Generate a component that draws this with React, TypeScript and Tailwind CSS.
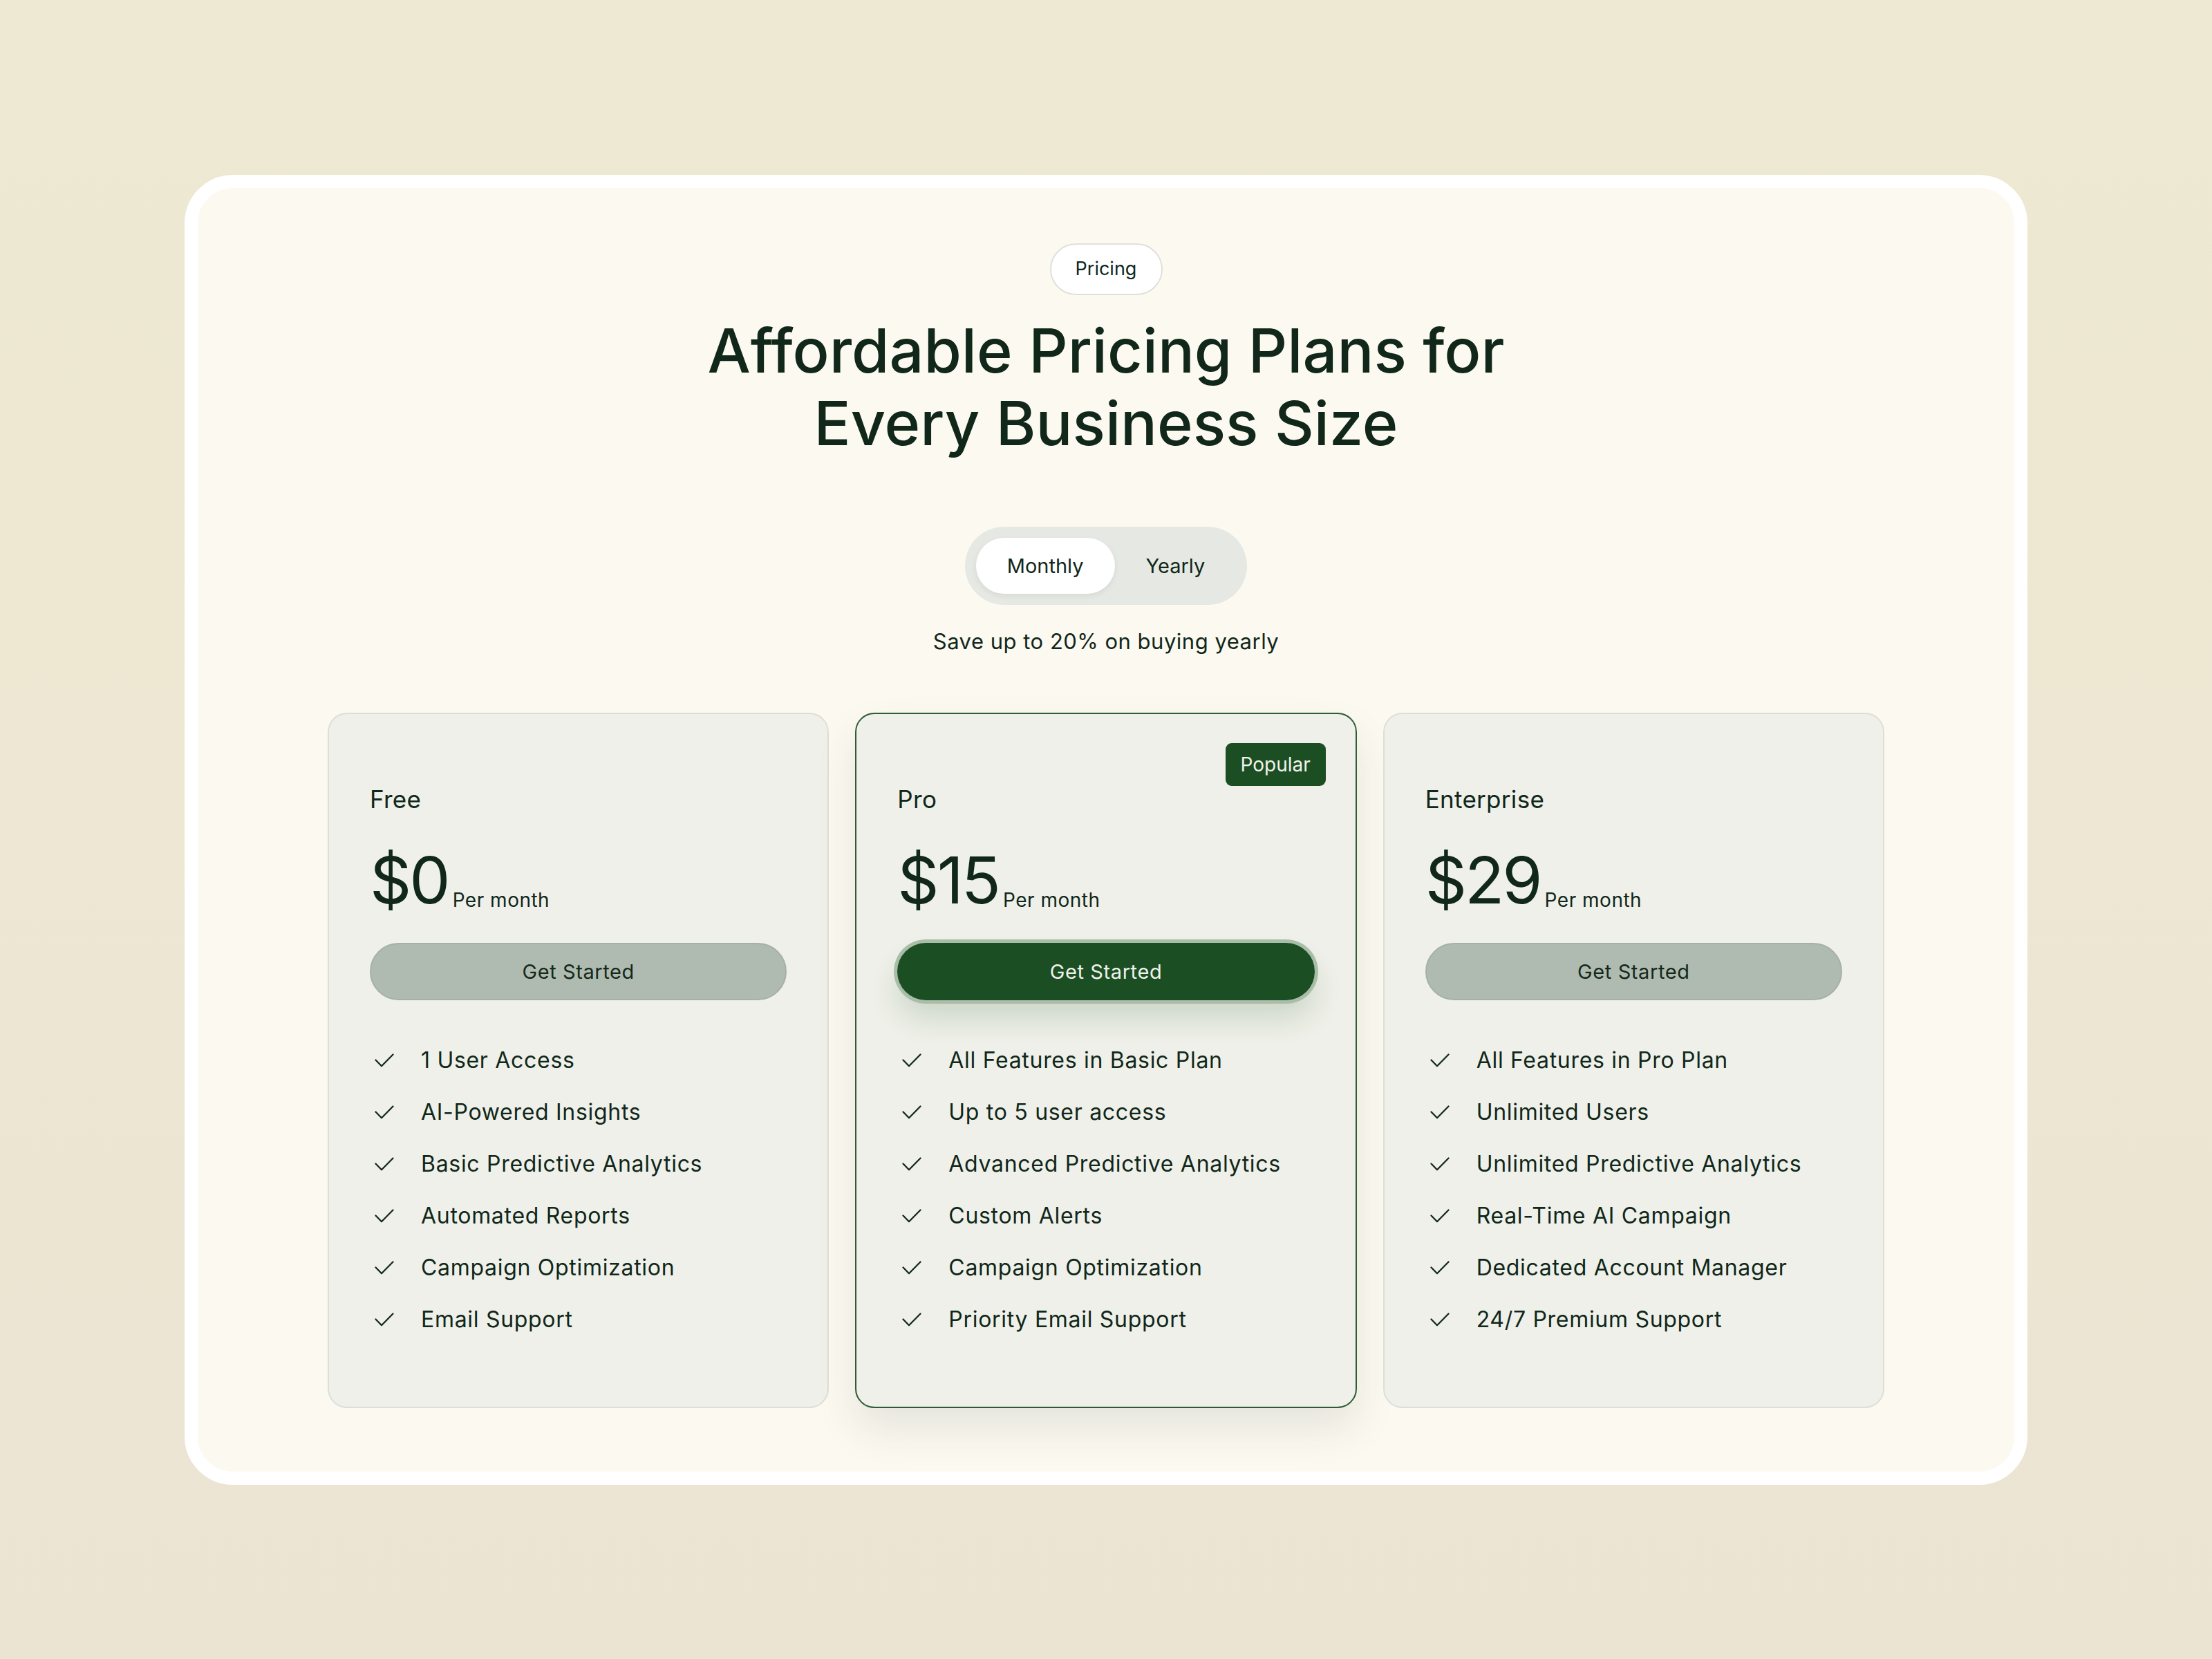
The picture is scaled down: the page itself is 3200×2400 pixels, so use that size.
import React from "react";

const CheckIcon = () => (
  <svg width="28" height="20" viewBox="0 0 28 20" fill="none" className="shrink-0">
    <path d="M1.5 9.5 L10 18.2 L26.5 1.5" stroke="#15291a" strokeWidth="2.3" strokeLinecap="round" strokeLinejoin="round" />
  </svg>
);

type Plan = {
  name: string;
  price: string;
  features: string[];
  featured?: boolean;
};

const plans: Plan[] = [
  {
    name: "Free",
    price: "$0",
    features: [
      "1 User Access",
      "AI-Powered Insights",
      "Basic Predictive Analytics",
      "Automated Reports",
      "Campaign Optimization",
      "Email Support",
    ],
  },
  {
    name: "Pro",
    price: "$15",
    featured: true,
    features: [
      "All Features in Basic Plan",
      "Up to 5 user access",
      "Advanced Predictive Analytics",
      "Custom Alerts",
      "Campaign Optimization",
      "Priority Email Support",
    ],
  },
  {
    name: "Enterprise",
    price: "$29",
    features: [
      "All Features in Pro Plan",
      "Unlimited Users",
      "Unlimited Predictive Analytics",
      "Real-Time AI Campaign",
      "Dedicated Account Manager",
      "24/7 Premium Support",
    ],
  },
];

function PlanCard({ plan }: { plan: Plan }) {
  return (
    <div
      className={
        plan.featured
          ? "relative rounded-[28px] border-2 border-[#2f5b36] bg-[#eff0e9] px-[59px] pt-[102px] pb-[106px] shadow-[0_30px_60px_rgba(30,50,30,0.10)]"
          : "relative rounded-[28px] border-2 border-[#dddfd5] bg-[#eff0e9] px-[59px] pt-[102px] pb-[106px]"
      }
    >
      {plan.featured && (
        <div className="absolute top-[42px] right-[43px] flex h-[62px] w-[145px] items-center justify-center rounded-[9px] bg-[#1c4e23] text-[28px] text-[#f1f3ec]">
          Popular
        </div>
      )}
      <div className="text-[35px] leading-[43px] tracking-[0.3px]">{plan.name}</div>
      <div className="mt-[48px] flex items-end">
        <span className="text-[94px] leading-none tracking-[-3px]">{plan.price}</span>
        <span className="ml-[6px] text-[28px] leading-[1.2] tracking-[0.5px]">Per month</span>
      </div>
      <button
        className={
          plan.featured
            ? "mt-[44px] flex h-[83px] w-full items-center justify-center rounded-full bg-[#1c4e23] text-[29px] tracking-[0.6px] text-[#eef2ea] shadow-[0_0_0_5px_#a9bea9,0_26px_40px_rgba(27,78,34,0.16)]"
            : "mt-[44px] flex h-[83px] w-full items-center justify-center rounded-full border-2 border-[#a5b1a6] bg-[#afbbb0] text-[29px] tracking-[0.6px] text-[#15291a]"
        }
      >
        Get Started
      </button>
      <ul className="mt-[67px] flex flex-col gap-[35px]">
        {plan.features.map((f) => (
          <li key={f} className="flex h-[40px] items-center pl-[7px]">
            <CheckIcon />
            <span className="ml-[39px] text-[32px] leading-[40px] tracking-[0.7px]">{f}</span>
          </li>
        ))}
      </ul>
    </div>
  );
}

export default function App() {
  return (
    <div className="min-h-[2400px] w-full bg-[linear-gradient(180deg,#eee9d2_0%,#ece4d3_100%)] pt-[253px] pb-[252px] font-[Inter,sans-serif] text-[#10271a]">
      <div className="mx-auto w-[2666px] rounded-[70px] border-[19px] border-white bg-[#fcf9f1] px-[188px] pt-[80px] pb-[92px]">
        <div className="flex flex-col items-center">
          <div className="flex h-[75px] w-[163px] items-center justify-center rounded-full border-2 border-[#e0e0da] bg-white text-[27px]">
            Pricing
          </div>
          <h1 className="mt-[28px] text-center text-[88px] leading-[105px] font-medium">
            Affordable Pricing Plans for
            <br />
            Every Business Size
          </h1>
          <div className="mt-[97px] flex rounded-full bg-[#e6e9e3] p-[16px]">
            <div className="flex h-[81px] items-center rounded-full bg-white px-[45px] text-[29px] shadow-[0_3px_8px_rgba(0,0,0,0.07)]">
              Monthly
            </div>
            <div className="flex h-[81px] items-center px-[45px] text-[29px]">Yearly</div>
          </div>
          <p className="mt-[33px] text-[31px] leading-[40px] tracking-[0.5px]">Save up to 20% on buying yearly</p>
        </div>
        <div className="mt-[83px] grid grid-cols-3 gap-[38px]">
          {plans.map((p) => (
            <PlanCard key={p.name} plan={p} />
          ))}
        </div>
      </div>
    </div>
  );
}
